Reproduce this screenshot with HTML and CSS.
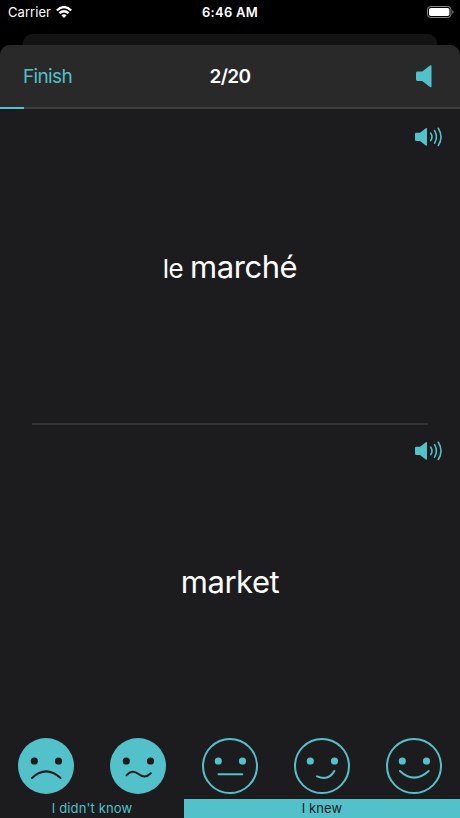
FILE: index.html
```html
<!DOCTYPE html>
<html lang="en">
<head>
  <meta charset="UTF-8">
  <title>Flashcards</title>
  <link rel="stylesheet" href="styles.css">
</head>
<body>
  <svg class="defs" width="0" height="0">
    <symbol id="speaker" viewBox="0 0 27 22">
      <path d="M1.2 6.7H5L10.8 2.2Q12 1.4 12 2.8V18.8Q12 20.2 10.8 19.4L5 14.9H1.2Q0 14.9 0 13.7V7.9Q0 6.7 1.2 6.7Z" fill="currentColor"/>
      <path d="M15.7 7.2Q18.3 10.9 15.7 14.6M19.6 4.6Q23.2 10.9 19.6 17.2M23.3 2.3Q28.7 10.9 23.3 19.5" fill="none" stroke="currentColor" stroke-width="1.6" stroke-linecap="round"/>
    </symbol>
  </svg>

  <div class="status-bar">
    <div class="carrier">
      <span>Carrier</span>
      <svg width="16" height="12" viewBox="0 0 16 12" fill="none" stroke="#fff" stroke-width="2.3">
        <path d="M.8 4.5Q8-2.2 15.2 4.5M3.4 7.2Q8 3.2 12.6 7.2"/>
        <path d="M8 12L5.3 9.3Q8 7.2 10.7 9.3Z" fill="#fff" stroke="none"/>
      </svg>
    </div>
    <div class="time">6:46 AM</div>
    <svg class="battery" width="27" height="12" viewBox="0 0 27 12">
      <rect x=".5" y=".5" width="23.4" height="11" rx="3.2" fill="none" stroke="#8c8c8c"/>
      <rect x="2" y="2" width="20.4" height="8" rx="1.8" fill="#fff"/>
      <path d="M25.2 4.2Q26.5 4.7 26.5 6T25.2 7.8Z" fill="#8c8c8c"/>
    </svg>
  </div>

  <div class="sheet-behind"></div>
  <div class="sheet">
    <div class="header">
      <div class="finish">Finish</div>
      <div class="count">2/20</div>
      <svg class="mute" width="16" height="23" viewBox="0 0 16 23">
        <path d="M1.4 6.6H6.2L14 .6Q15.5-.3 15.5 1.2V21.4Q15.5 22.9 14 21.9L6.2 16H1.4Q0 16 0 14.6V8Q0 6.6 1.4 6.6Z" fill="currentColor"/>
      </svg>
    </div>
    <div class="progress"><div class="progress-value"></div></div>

    <div class="card front">
      <svg class="speak" width="27" height="22"><use href="#speaker"/></svg>
      <div class="word"><span class="article">le</span> marché</div>
    </div>
    <div class="divider"></div>
    <div class="card back">
      <svg class="speak" width="27" height="22"><use href="#speaker"/></svg>
      <div class="word">market</div>
    </div>

    <div class="faces">
      <svg class="face filled" viewBox="0 0 56 56">
        <circle class="head" cx="28" cy="28" r="28"/>
        <circle class="eye" cx="16.3" cy="23" r="3.6"/>
        <circle class="eye" cx="40.5" cy="23" r="3.6"/>
        <path class="mouth" d="M14 40Q28 26.8 42.5 40"/>
      </svg>
      <svg class="face filled" viewBox="0 0 56 56">
        <circle class="head" cx="28" cy="28" r="28"/>
        <circle class="eye" cx="16.3" cy="23" r="3.6"/>
        <circle class="eye" cx="40.5" cy="23" r="3.6"/>
        <path class="mouth" d="M16.5 37.3C20.5 32.7 24.5 32.8 28.5 36.1S36.5 39.5 40.8 35.2"/>
      </svg>
      <svg class="face" viewBox="0 0 56 56">
        <circle class="head" cx="28" cy="28" r="27"/>
        <circle class="eye" cx="16.3" cy="23" r="3.6"/>
        <circle class="eye" cx="40.5" cy="23" r="3.6"/>
        <path class="mouth" d="M16.5 36.2H40.3"/>
      </svg>
      <svg class="face" viewBox="0 0 56 56">
        <circle class="head" cx="28" cy="28" r="27"/>
        <circle class="eye" cx="16.3" cy="23" r="3.6"/>
        <circle class="eye" cx="40.5" cy="23" r="3.6"/>
        <path class="mouth" d="M23 38.4Q34.8 43.2 40.3 33"/>
      </svg>
      <svg class="face" viewBox="0 0 56 56">
        <circle class="head" cx="28" cy="28" r="27"/>
        <circle class="eye" cx="16.3" cy="23" r="3.6"/>
        <circle class="eye" cx="40.5" cy="23" r="3.6"/>
        <path class="mouth" d="M13.9 33Q28 46.2 42.7 33"/>
      </svg>
    </div>
    <div class="answers">
      <div class="unknown">I didn't know</div>
      <div class="known">I knew</div>
    </div>
  </div>
</body>
</html>
```

FILE: styles.css
```css
* { box-sizing: border-box; }
body { margin: 0; height: 818px; overflow: hidden; display: flex; flex-direction: column; background: #000; color: #fff; font-family: Inter, sans-serif; }
.defs { position: absolute; }

.status-bar { height: 34px; padding: 0 6px 10px 8px; display: grid; grid-template-columns: 1fr auto 1fr; align-items: center; font-size: 13px; }
.carrier { display: flex; align-items: center; gap: 5px; letter-spacing: 0.05px; }
.time { margin-right: 2px; font-weight: 600; letter-spacing: 0.25px; }
.battery { justify-self: end; }

.sheet-behind { height: 11px; flex: none; margin: 0 23px; background: #141414; border-radius: 9px 9px 0 0; }
.sheet { flex: 1; display: flex; flex-direction: column; background: #1c1c1e; border-radius: 10px 10px 0 0; overflow: hidden; }
.header { height: 62px; padding: 1px 28px 0 23px; display: grid; grid-template-columns: 1fr auto 1fr; align-items: center; background: #292929; font-size: 19px; }
.finish, .mute, .speak { color: #52c1ca; }
.finish { letter-spacing: -0.65px; }
.count { margin-left: 5px; font-weight: 600; letter-spacing: -0.6px; }
.mute { justify-self: end; }
.progress { height: 2px; background: #404041; }
.progress-value { width: 5.2%; height: 100%; background: #52c1ca; }

.card { display: flex; flex-direction: column; }
.front { height: 314px; padding-top: 17px; }
.back { height: 313px; padding-top: 15px; }
.speak { align-self: flex-end; margin-right: 18px; }
.word { margin-top: 99px; text-align: center; font-size: 31px; line-height: 40px; letter-spacing: -0.45px; word-spacing: -1.5px; }
.back .word { margin-top: 100px; }
.article { font-size: 26px; }
.divider { height: 2px; margin: 0 32px; background: #333335; }

.faces { display: flex; justify-content: space-between; padding: 0.5px 18px 0; height: 62px; }
.face { width: 56px; height: 56px; }
.head { fill: none; stroke: #52c1ca; stroke-width: 2; }
.eye { fill: #52c1ca; }
.mouth { fill: none; stroke: #52c1ca; stroke-width: 2; stroke-linecap: round; }
.filled .head { fill: #52c1ca; stroke: none; }
.filled .eye { fill: #1c1c1e; }
.filled .mouth { stroke: #1c1c1e; }

.answers { display: grid; grid-template-columns: 2fr 3fr; height: 19px; font-size: 13px; line-height: 19px; text-align: center; letter-spacing: 0.12px; }
.unknown { color: #52c1ca; }
.known { background: #52c1ca; color: #1c1c1e; }
```
